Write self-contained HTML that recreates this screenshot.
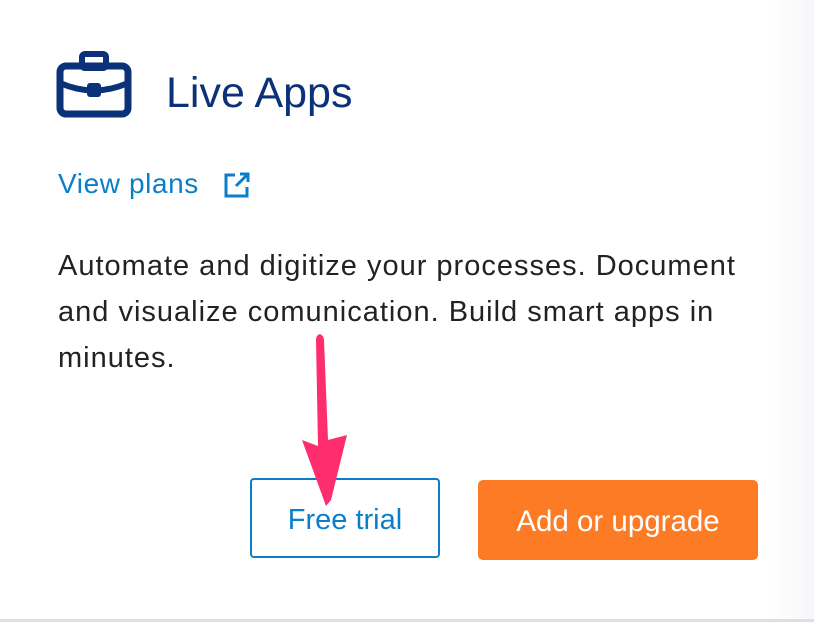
<!DOCTYPE html>
<html><head><style>
html,body{margin:0;padding:0}
body{width:814px;height:622px;position:relative;overflow:hidden;font-family:"Liberation Sans",sans-serif;
background:linear-gradient(to right,#fff 0,#fff 770px,#f6f7f9 814px);}
.bot{position:absolute;left:0;right:0;bottom:0;height:3px;background:#dcdfe4}
.t{position:absolute;white-space:nowrap}
</style></head><body>
<svg style="position:absolute;left:56px;top:50px" width="76" height="68" viewBox="0 0 76 68">
<rect x="4" y="16" width="68" height="48" rx="6" fill="none" stroke="#0b3278" stroke-width="7"/>
<rect x="26" y="4" width="24" height="14" rx="3" fill="none" stroke="#0b3278" stroke-width="6"/>
<path d="M4 33 Q38 48 72 33" fill="none" stroke="#0b3278" stroke-width="6"/>
<rect x="31" y="33" width="14" height="14" rx="3" fill="#0b3278"/>
</svg>
<div class="t" style="left:166px;top:69px;font-size:43px;color:#0b3278">Live Apps</div>
<div class="t" style="left:58px;top:168px;font-size:28px;letter-spacing:0.6px;color:#0a7fc9">View plans</div>
<svg style="position:absolute;left:222px;top:170px" width="30" height="30" viewBox="0 0 30 30">
<path d="M13 5H4v21h21v-9" fill="none" stroke="#0a7fc9" stroke-width="3"/>
<path d="M14 16L26 4M18 4h8v8" fill="none" stroke="#0a7fc9" stroke-width="3"/>
</svg>
<div class="t" style="left:58px;top:243px;font-size:29px;letter-spacing:1px;line-height:46px;color:#222">Automate and digitize your processes. Document<br>and visualize comunication. Build smart apps in<br>minutes.</div>
<div style="position:absolute;left:250px;top:478px;width:186px;height:76px;border:2px solid #0a7fc9;border-radius:4px;color:#0a7fc9;font-size:29px;text-align:center;line-height:80px">Free trial</div>
<div style="position:absolute;left:478px;top:480px;width:280px;height:80px;background:#fc7b24;border-radius:5px;color:#fff;font-size:29.5px;text-align:center;line-height:84px">Add or upgrade</div>
<svg style="position:absolute;left:290px;top:330px" width="70" height="180" viewBox="0 0 70 180">
<path d="M30 4 Q34 6 34 10 L38 110 L57 105 L41 170 L36 176 L12 110 L28 116 L26 10 Q26 5 30 4Z" fill="#fe2e6e"/>
</svg>
<div class="bot"></div>
</body></html>
